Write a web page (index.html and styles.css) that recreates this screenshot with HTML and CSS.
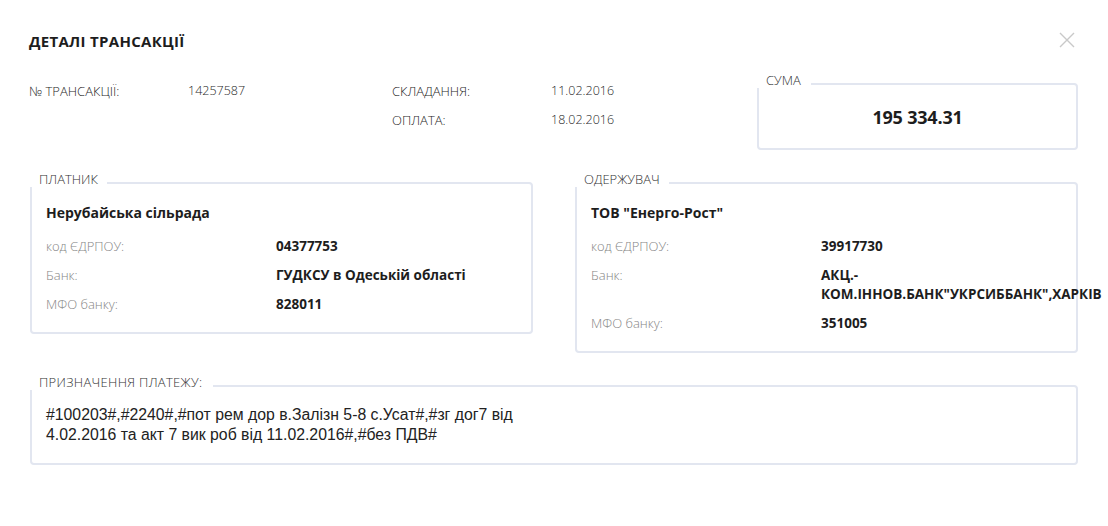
FILE: index.html
```html
<!DOCTYPE html>
<html lang="uk">
<head>
<meta charset="utf-8">
<title>Деталі трансакції</title>
<link rel="stylesheet" href="styles.css">
</head>
<body>
<div class="modal">
  <div class="header">
    <h1 class="title">ДЕТАЛІ ТРАНСАКЦІЇ</h1>
    <button class="close" aria-label="Закрити">
      <svg width="16" height="16" viewBox="0 0 16 16"><path d="M1 1 L15 15 M15 1 L1 15" stroke="#c9c9c9" stroke-width="1.4" fill="none"/></svg>
    </button>
  </div>

  <div class="top">
    <div class="info">
      <div class="info-row">
        <span class="info-label">№ ТРАНСАКЦІЇ:</span>
        <span class="info-value">14257587</span>
        <span class="info-label">СКЛАДАННЯ:</span>
        <span class="info-value">11.02.2016</span>
      </div>
      <div class="info-row">
        <span class="info-label"></span>
        <span class="info-value"></span>
        <span class="info-label">ОПЛАТА:</span>
        <span class="info-value">18.02.2016</span>
      </div>
    </div>
    <div class="box sum-box">
      <span class="box-label">СУМА</span>
      <div class="sum">195 334.31</div>
    </div>
  </div>

  <div class="parties">
    <div class="box party">
      <span class="box-label">ПЛАТНИК</span>
      <div class="party-name">Нерубайська сільрада</div>
      <div class="party-row"><span class="p-label">код ЄДРПОУ:</span><span class="p-value">04377753</span></div>
      <div class="party-row"><span class="p-label">Банк:</span><span class="p-value">ГУДКСУ в Одеській області</span></div>
      <div class="party-row"><span class="p-label">МФО банку:</span><span class="p-value">828011</span></div>
    </div>
    <div class="box party">
      <span class="box-label">ОДЕРЖУВАЧ</span>
      <div class="party-name">ТОВ "Енерго-Рост"</div>
      <div class="party-row"><span class="p-label">код ЄДРПОУ:</span><span class="p-value">39917730</span></div>
      <div class="party-row"><span class="p-label">Банк:</span><span class="p-value wrap">АКЦ.-<br>КОМ.ІННОВ.БАНК"УКРСИББАНК",ХАРКІВ</span></div>
      <div class="party-row"><span class="p-label">МФО банку:</span><span class="p-value">351005</span></div>
    </div>
  </div>

  <div class="box purpose">
    <span class="box-label">ПРИЗНАЧЕННЯ ПЛАТЕЖУ:</span>
    <p class="purpose-text">#100203#,#2240#,#пот рем дор в.Залізн 5-8 с.Усат#,#зг дог7 від<br>4.02.2016 та акт 7 вик роб від 11.02.2016#,#без ПДВ#</p>
  </div>
</div>
</body>
</html>
```

FILE: styles.css
```css
* { box-sizing: border-box; }

body {
  margin: 0;
  background: #ffffff;
  font-family: "Open Sans", "Liberation Sans", sans-serif;
  color: #222;
}

.modal {
  width: 1108px;
  padding: 30px 0 0 30px;
}

.header {
  display: flex;
  align-items: center;
  justify-content: space-between;
  height: 22px;
  width: 1048px;
}

.title {
  margin: 0 0 0 -1px;
  font-size: 15px;
  font-weight: 700;
  line-height: 22px;
  color: #1d1d1d;
  letter-spacing: 0.3px;
}

.close {
  border: 0;
  background: none;
  padding: 0;
  width: 16px;
  height: 16px;
  margin-right: 3px;
  margin-top: -3px;
  cursor: pointer;
}
.close svg { display: block; }

.top {
  display: flex;
  justify-content: space-between;
  width: 1048px;
  margin-top: 29px;
}

.info {
  display: flex;
  flex-direction: column;
  gap: 9px;
  margin-left: -1px;
}

.info-row {
  display: grid;
  grid-template-columns: 159px 204px 159px 120px;
  line-height: 20px;
  font-weight: 300;
  color: #1f1f1f;
}
.info-label { font-size: 13px; }
.info-value { font-size: 12.5px; }

.box {
  position: relative;
  border: 2px solid #e2e6f0;
  border-radius: 4px;
  background: #fff;
}

.box-label {
  position: absolute;
  top: -13px;
  left: -2px;
  padding: 0 9px 0 9px;
  background: #fff;
  font-size: 13px;
  font-weight: 300;
  line-height: 16px;
  color: #333;
}

.sum-box {
  width: 321px;
  height: 67px;
  margin-top: 2px;
  display: flex;
  align-items: center;
  justify-content: center;
}
.sum-box .box-label { padding: 0 10px 0 9px; }

.sum {
  font-size: 18px;
  font-weight: 700;
  color: #1d1d1d;
  letter-spacing: -0.2px;
  margin-top: 1px;
}

.parties {
  display: flex;
  align-items: flex-start;
  gap: 42px;
  width: 1048px;
  margin-top: 32px;
}

.party {
  width: 503px;
  padding: 19px 14px 18px 14px;
}

.party-name {
  font-size: 14px;
  font-weight: 700;
  line-height: 20px;
  color: #1d1d1d;
  margin-bottom: 14px;
}

.party-row {
  display: grid;
  grid-template-columns: 230px 1fr;
  line-height: 19px;
  margin-top: 10px;
}
.party-name + .party-row { margin-top: 0; }

.p-label {
  font-size: 13px;
  font-weight: 300;
  color: #858585;
}

.p-value {
  font-size: 13.5px;
  font-weight: 700;
  color: #1d1d1d;
}
.p-value.wrap { white-space: nowrap; }

.purpose {
  width: 1048px;
  margin-top: 32px;
  padding: 18px 14px 18px 14px;
}
.purpose .box-label { letter-spacing: 0.3px; padding-right: 11px; }

.purpose-text {
  margin: 0;
  font-family: "Liberation Sans", Arial, sans-serif;
  font-size: 15.8px;
  line-height: 20px;
  color: #222;
}
```
